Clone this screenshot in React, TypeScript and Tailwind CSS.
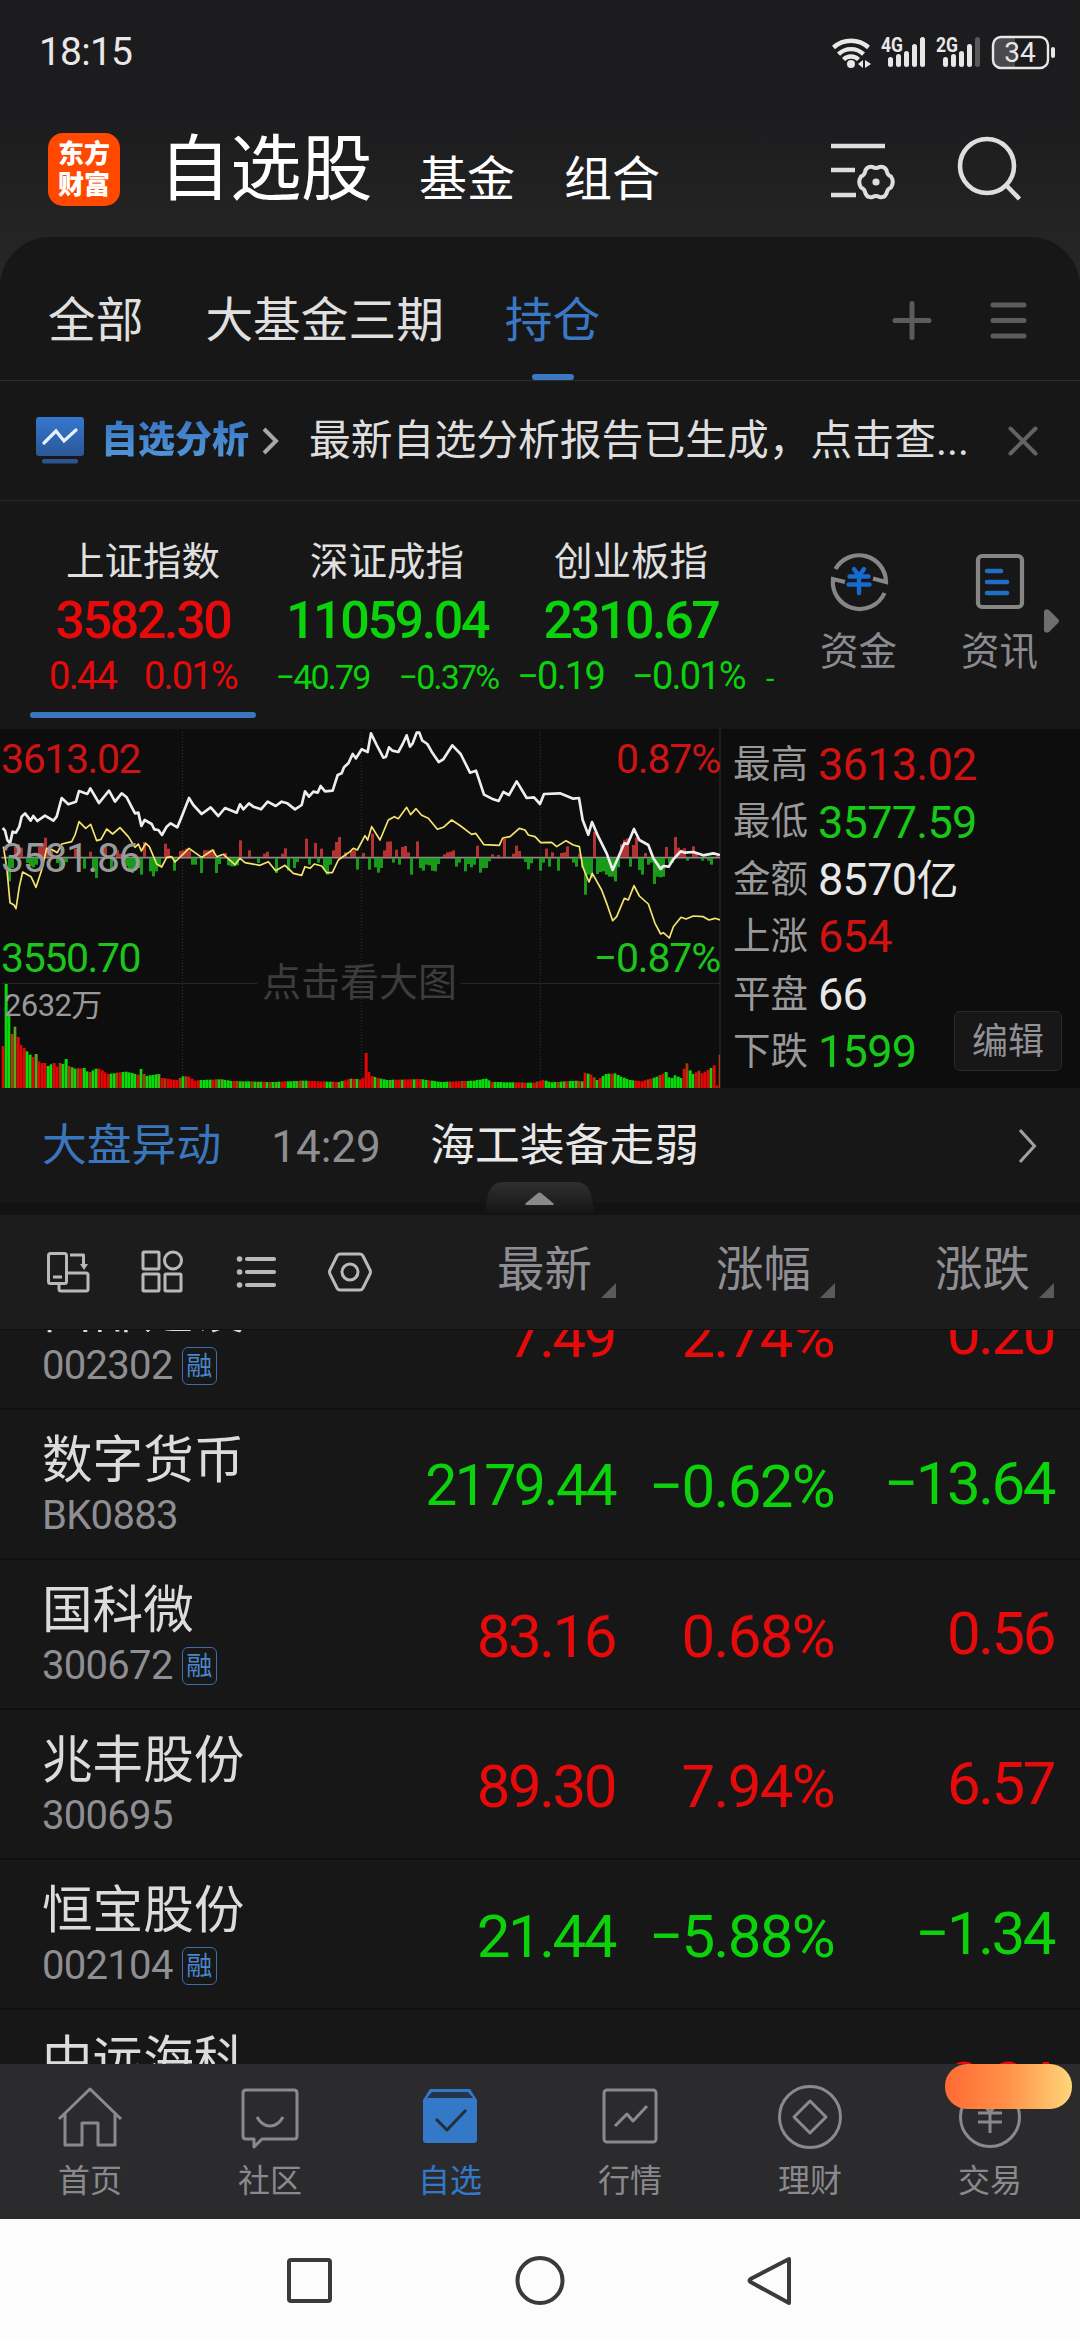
import type { ReactNode } from "react";
import { clsx } from "clsx";

const RED = "text-[#e60a0a]";
const GREEN = "text-[#0cd20c]";

const indices = [
  { name: "上证指数", price: "3582.30", change: "0.44", percent: "0.01%", up: true, active: true },
  { name: "深证成指", price: "11059.04", change: "−40.79", percent: "−0.37%", up: false, active: false },
  { name: "创业板指", price: "2310.67", change: "−0.19", percent: "−0.01%", up: false, active: false },
];

const stats = [
  { label: "最高", value: "3613.02", color: "text-[#d01212]" },
  { label: "最低", value: "3577.59", color: "text-[#18c818]" },
  { label: "金额", value: "8570亿", color: "text-[#e8e8e8]" },
  { label: "上涨", value: "654", color: "text-[#d01212]" },
  { label: "平盘", value: "66", color: "text-[#e8e8e8]" },
  { label: "下跌", value: "1599", color: "text-[#18c818]" },
];

const stocks = [
  { name: "西部建设", code: "002302", margin: true, price: "7.49", percent: "2.74%", change: "0.20", up: true },
  { name: "数字货币", code: "BK0883", margin: false, price: "2179.44", percent: "−0.62%", change: "−13.64", up: false },
  { name: "国科微", code: "300672", margin: true, price: "83.16", percent: "0.68%", change: "0.56", up: true },
  { name: "兆丰股份", code: "300695", margin: false, price: "89.30", percent: "7.94%", change: "6.57", up: true },
  { name: "恒宝股份", code: "002104", margin: true, price: "21.44", percent: "−5.88%", change: "−1.34", up: false },
  { name: "中远海科", code: "002401", margin: true, price: "16.40", percent: "1.48%", change: "0.24", up: true },
];

// Chart coordinates use a 2160 x 1077 grid, one minute pair every 9 units
const PRICE_LINE =
  "8,324 15,332 22,360 30,370 38,335 48,338 58,320 65,290 75,280 92,302 100,288 112,303 135,287 160,302 170,290 185,234 205,253 228,245 237,213 262,222 271,205 297,249 327,212 345,245 365,220 380,232 405,280 415,278 424,318 434,300 455,312 463,328 475,330 486,345 500,320 512,310 532,322 545,290 567,234 580,255 605,282 632,262 655,288 675,264 710,278 720,253 730,268 747,250 760,260 783,268 803,245 827,258 845,245 862,250 885,268 905,255 915,214 927,230 940,215 953,218 962,198 975,214 998,212 1013,165 1025,160 1032,142 1045,130 1058,102 1068,115 1085,88 1103,96 1113,40 1130,75 1150,113 1158,110 1167,82 1177,92 1195,96 1208,72 1220,46 1230,80 1238,70 1250,38 1258,38 1267,62 1282,72 1295,95 1316,126 1330,118 1357,76 1382,102 1410,158 1428,152 1452,224 1480,238 1496,243 1510,216 1527,225 1550,184 1580,234 1602,232 1620,252 1632,222 1680,220 1720,236 1737,234 1748,300 1765,344 1776,306 1795,350 1820,400 1838,450 1860,400 1873,370 1883,372 1902,327 1918,360 1945,375 1960,415 1982,447 1990,438 2006,440 2020,418 2042,394 2055,398 2080,396 2110,406 2140,400 2160,405";

const AVERAGE_LINE =
  "10,380 20,440 30,548 42,555 48,566 58,500 68,456 93,470 108,502 125,450 140,385 158,390 172,398 185,372 215,365 225,345 237,305 257,325 272,313 290,362 303,358 320,327 338,342 360,323 385,350 405,382 415,372 424,393 437,370 448,380 470,432 485,441 500,412 515,410 525,426 567,385 585,398 605,412 638,390 650,410 670,403 705,434 720,415 735,428 780,436 805,425 827,452 855,436 880,460 905,466 915,440 930,445 943,432 965,438 980,458 997,458 1015,420 1050,395 1060,385 1072,390 1095,347 1103,360 1115,320 1140,360 1165,300 1183,290 1195,296 1220,262 1232,284 1248,266 1265,286 1285,295 1312,328 1330,322 1355,300 1382,318 1415,343 1427,340 1452,374 1498,376 1508,354 1530,350 1558,325 1575,330 1585,345 1605,350 1622,368 1655,367 1670,380 1698,362 1720,375 1738,380 1748,440 1767,486 1777,460 1805,510 1820,550 1838,602 1850,590 1873,535 1885,540 1902,497 1918,528 1945,552 1965,610 1982,642 1990,638 2008,654 2020,620 2043,592 2058,597 2080,588 2110,590 2127,600 2145,595 2160,600";

// [bar index, height], positive bars are drawn in red above the base line
const MOMENTUM: [number, number][] = [
  [2, -70], [3, -30], [4, 30], [5, 38], [6, 28], [8, -15], [9, -25], [10, -28], [11, -20], [12, 30], [13, 40], [14, 58], [15, 28], [16, 25],
  [18, -15], [19, -30], [20, -20], [21, -12], [24, 25], [25, 35], [27, -32], [29, 16], [30, -30], [31, -60], [34, 35], [36, -35], [38, 20], [39, 10],
  [41, -25], [42, -35], [43, -45], [44, -35], [45, -30], [46, -50], [47, 45], [49, -40], [50, -55], [51, -40], [52, -25], [54, 40], [55, 25], [57, -38],
  [59, 18], [60, 20], [61, 25], [62, 20], [63, -20], [64, -20], [66, -45], [67, 20], [68, 20], [69, 20], [70, 22], [71, -45], [72, -18], [74, 12],
  [75, -22], [76, -25], [77, -25], [78, -22], [79, 50], [82, 20], [85, -15], [87, 10], [88, 16], [91, -45], [93, 10], [94, 26], [95, -38], [97, -30], [98, -12],
  [101, 55], [102, -20], [104, 42], [105, -14], [106, 25], [107, -36], [108, -50], [109, -20], [110, 20], [111, 45], [112, 60], [114, 14], [116, 18], [117, 20], [118, -35], [120, 12],
  [122, -35], [123, 70], [124, -28], [125, -44], [126, -30], [127, 20], [128, 46], [129, 47], [130, -14], [131, 22], [132, -20], [133, 30], [134, 33], [135, 14], [136, -50],
  [138, 47], [139, -30], [140, -38], [141, -20], [142, -22], [143, -38], [144, -40], [145, -18], [147, 8], [148, 14], [149, 16], [150, 20], [151, -26], [152, -14],
  [154, -40], [155, -18], [156, -28], [157, -20], [158, 34], [159, -44], [160, -30], [161, -30], [162, -10], [163, 8], [165, 6], [167, 55], [170, 10], [171, 34], [172, 18],
  [174, -12], [175, -34], [176, -16], [179, -38], [180, -14], [181, 25], [182, -26], [183, 14], [185, -38], [186, 12], [187, 14], [188, 32], [190, -14], [191, -26], [192, 10],
  [193, -28], [194, -110], [195, -50], [196, -60], [197, 76], [198, -48], [199, -42], [200, -40], [201, -50], [202, -56], [203, -56], [204, -70], [205, -28], [206, 38], [207, 52], [208, 56],
  [209, -26], [210, 36], [211, 58], [212, -36], [213, -50], [214, 12], [215, -20], [216, -14], [217, -78], [218, -56], [219, -58], [220, -56], [221, 30], [222, -16], [223, -14],
  [224, 60], [225, 28], [226, 22], [227, 26], [228, -8], [230, 32], [231, 14], [233, -8], [235, -8], [236, -20], [238, 4],
];

// Keyframes of the volume histogram: [bar index, height]
const VOLUME: [number, number][] = [
  [0, 126], [1, 312], [2, 216], [3, 162], [4, 184], [5, 153], [6, 129], [7, 120], [8, 110], [9, 100], [10, 93], [11, 102], [12, 80], [13, 75], [14, 75], [15, 66],
  [17, 75], [18, 64], [19, 75], [20, 72], [21, 87], [22, 66], [24, 58], [27, 60], [28, 50], [29, 48], [31, 58], [32, 58], [35, 42], [41, 49], [45, 40], [46, 57], [47, 42],
  [48, 36], [52, 42], [53, 30], [58, 24], [60, 35], [62, 34], [64, 22], [68, 25], [73, 26], [76, 21], [90, 18], [100, 22], [112, 18], [116, 28], [119, 26], [120, 30], [121, 105],
  [122, 48], [123, 36], [125, 30], [128, 24], [136, 26], [139, 27], [146, 18], [157, 22], [161, 28], [163, 18], [177, 16], [180, 24], [183, 17], [191, 22], [193, 20],
  [194, 46], [196, 40], [198, 24], [201, 42], [204, 44], [206, 34], [209, 24], [213, 20], [218, 34], [221, 48], [222, 32], [223, 30], [224, 38], [226, 30], [227, 58],
  [228, 74], [229, 53], [230, 42], [232, 52], [233, 44], [235, 54], [236, 60], [237, 68], [238, 8], [239, 100],
];

const VOLUME_COLORS =
  "rggmorrrggrorrrggrrmggmogmrggmggrrrrggmrgggggrgmggggormrrrrmgmrrrrggggrmgogggrmgoggmgogrgmgogrrgggomogrrrrrrggmrogrrorgrrrrrgrgggogrrorrrgrrggrggggggmrrrmrggggggggrgggggggrrmrggrmrrggggmgorggomorgrmgrgggrgggggggrrrrmrggmrggggggrmggrmrrrgrrmrggrrorg";

const FILLS: Record<string, string> = { r: "#e60505", g: "#08dc08", m: "#a83c0c", o: "#55a81c" };

function volumeAt(index: number) {
  const next = VOLUME.findIndex(([i]) => i >= index);
  if (VOLUME[next][0] === index) return VOLUME[next][1];
  const [x0, y0] = VOLUME[next - 1];
  const [x1, y1] = VOLUME[next];
  return Math.round(y0 + ((y1 - y0) * (index - x0)) / (x1 - x0));
}

function StatusBar() {
  return (
    <div className="flex h-[104px] items-center justify-between pl-[39px] pr-[24px] text-[#e8e8e8]">
      <span className="text-[39px] leading-none tracking-[-0.8px]">18:15</span>
      <div className="flex items-center gap-[10px]">
        <svg width="39" height="34" viewBox="0 0 39 34" fill="none" stroke="currentColor" strokeWidth="4.4">
          <path d="M1.5 12.5a26 26 0 0 1 35 0" />
          <path d="M6.5 19.2a18 18 0 0 1 25 0" />
          <path d="M11.500 24.500a11 11 0 0 1 15 0" />
          <circle cx="19" cy="29" r="4" fill="currentColor" stroke="none" />
          <path d="M31 25v8l-5-4zM33 25v8l6-4z" fill="currentColor" stroke="none" />
        </svg>
        <Signal label="4G" weak={false} />
        <Signal label="2G" weak />
        <svg width="65" height="35" viewBox="0 0 65 35" fill="none">
          <path d="M10 2h14v31H10a8 8 0 0 1-8-8V10a8 8 0 0 1 8-8z" fill="#4a4a4c" />
          <rect x="2" y="2" width="55" height="31" rx="8" stroke="currentColor" strokeWidth="2.4" />
          <rect x="60" y="12" width="4" height="11" rx="2" fill="currentColor" />
          <text x="29" y="27" textAnchor="middle" fontSize="28" fill="currentColor" fontFamily="Roboto">
            34
          </text>
        </svg>
      </div>
    </div>
  );
}

function Signal({ label, weak }: { label: string; weak: boolean }) {
  return (
    <svg className="overflow-visible" width="45" height="34" viewBox="0 0 45 34" fill="currentColor">
      <text x="0" y="17" fontSize="20" fontWeight="700" textLength="22" lengthAdjust="spacingAndGlyphs" fontFamily="Roboto">
        {label}
      </text>
      <rect x="7" y="22" width="5" height="10" rx="2.500" />
      <rect x="15" y="19" width="5" height="13" rx="2.500" />
      <rect x="23" y="16" width="5" height="16" rx="2.500" />
      <rect x="31" y="9" width="5" height="23" rx="2.500" />
      <rect x="39" y="2" width="5" height="30" rx="2.500" opacity={weak ? 0.3 : 1} />
    </svg>
  );
}

function Header() {
  return (
    <header className="flex h-[133px] pl-[48px] text-white">
      <div className="mt-[29px] flex h-[73px] w-[72px] flex-col items-center justify-center rounded-[15px] bg-[#ff4800] text-[26px] font-black leading-[31px]">
        <span>东方</span>
        <span>财富</span>
      </div>
      <div className="flex pl-[39px]">
        <h1 className="mt-[30px] w-[260px] text-[71.500px] leading-none tracking-[-0.5px]">自选股</h1>
        <span className="mt-[52px] w-[145px] text-[48px] leading-none">基金</span>
        <span className="mt-[52px] text-[48px] leading-none">组合</span>
      </div>
      <svg className="ml-auto mr-[58px] mt-[32px]" width="192" height="72" viewBox="0 0 192 72" fill="none" stroke="#dedede" strokeWidth="4.6">
        <path d="M1 10h54M1 34h24M1 59h25" />
        <path
          d="M42.500 31q3.500 2 7 0q6-1 7.500 5q.5 3 4 4.500q3.500 5.500 0 11q-3.500 1.500-4 4.500q-1.500 6-7.500 5q-3.500-2-7 0q-6 1-7.500-5q-.5-3-4-4.500q-3.500-5.500 0-11q3.500-1.500 4-4.500q1.500-6 7.500-5z"
          strokeWidth="4"
        />
        <circle cx="46" cy="46" r="3.600" fill="#dedede" stroke="none" />
        <circle cx="157" cy="30" r="27" />
        <path d="M175 48l14.500 15" />
      </svg>
    </header>
  );
}

function GroupTabs() {
  return (
    <div className="flex h-[144px] border-b border-[#2d2d2d] text-[47.700px] leading-none text-[#e0e0e0]">
      <span className="ml-[48px] mt-[61px]">全部</span>
      <span className="ml-[62px] mt-[61px]">大基金三期</span>
      <div className="ml-[61px] flex flex-col items-center text-[#3a78c3]">
        <span className="mt-[61px]">持仓</span>
        <i className="mt-auto h-[6px] w-[42px] rounded-full bg-[#3a78c3]" />
      </div>
      <svg className="ml-auto mr-[53px] mt-[62px]" width="136" height="44" viewBox="0 0 136 44" stroke="#5c5c5c" strokeWidth="5" strokeLinecap="round">
        <path d="M4 21.500h34M21 4.500v34M102 6h31M102 21.500h31M102 37h31" />
      </svg>
    </div>
  );
}

function AnalysisBanner() {
  return (
    <div className="flex h-[120px] items-center border-b border-[#2a2a2a] pl-[36px]">
      <svg width="48" height="48" viewBox="0 0 48 48" fill="none">
        <defs>
          <linearGradient id="analysis" x1="0" y1="0" x2="0" y2="1">
            <stop offset="0" stopColor="#3478cf" />
            <stop offset="1" stopColor="#2b5796" />
          </linearGradient>
        </defs>
        <rect width="48" height="39" y="0" rx="3" fill="url(#analysis)" />
        <rect x="6" y="42" width="36" height="4.500" rx="2" fill="#2c5490" />
        <path d="M8 26l12-12 8 10 12-11" stroke="#e6f1ff" strokeWidth="3.200" strokeLinecap="round" />
      </svg>
      <span className="ml-[17px] bg-gradient-to-b from-[#3a75c4] to-[#559bd9] bg-clip-text text-[37px] font-black leading-[44px] text-transparent">
        自选分析
      </span>
      <svg className="ml-[13px]" width="18" height="30" viewBox="0 0 18 30" fill="none" stroke="#a8a8a8" strokeWidth="4">
        <path d="M2 3l12 12L2 27" />
      </svg>
      <p className="ml-[29px] w-[671px] whitespace-nowrap text-[41.800px] leading-none text-[#dedede]">最新自选分析报告已生成，点击查...</p>
      <svg className="ml-[28px]" width="30" height="30" viewBox="0 0 30 30" stroke="#636363" strokeWidth="4" strokeLinecap="round">
        <path d="M2.500 2.500l25 25M27.500 2.500l-25 25" />
      </svg>
    </div>
  );
}

function IndexBar() {
  return (
    <div className="flex h-[228px] pl-[21px]">
      {indices.map((item) => (
        <div key={item.name} className={clsx("flex w-[244px] flex-col items-center", item.up ? RED : GREEN)}>
          <span className="mt-[42px] text-[38.500px] leading-none text-[#e0e0e0]">{item.name}</span>
          <span className="mt-[13px] text-[52px] font-medium leading-none tracking-[-2.400px]">{item.price}</span>
          <span
            className={clsx(
              "mt-[10px] flex h-[38px] items-center justify-center whitespace-nowrap leading-none tracking-[-1.800px]",
              item.name === "深证成指" ? "gap-[29px] pt-[2px] text-[34px]" : "gap-[28px] text-[38px]",
            )}
          >
            <span>{item.change}</span>
            <span>{item.percent}</span>
          </span>
          {item.active && <i className="mt-[17px] h-[6px] w-[226px] rounded-full bg-[#3a76bd]" />}
        </div>
      ))}
      <span className={clsx("ml-[13px] mt-[163px] w-[22px] text-[30px] leading-none", GREEN)}>-</span>
      <Shortcut label="资金">
        <g stroke="#868686" strokeWidth="4.200" fill="none">
          <path d="M6.500 20A27 27 0 0 1 57 33l-13-3.500" strokeLinejoin="miter" />
          <path d="M55.500 44A27 27 0 0 1 4 30l12 3" />
        </g>
        <path d="M25 20l5 7 5-7M20.500 27.500h19M19.500 35.500h21M30 27v17" stroke="#166bd0" strokeWidth="4.400" strokeLinecap="round" fill="none" />
      </Shortcut>
      <Shortcut label="资讯">
        <rect x="8" y="7" width="44" height="51" rx="4" stroke="#868686" strokeWidth="4.200" fill="none" />
        <path d="M17 22h14M17 33h20M17 44h20" stroke="#1f6fc8" strokeWidth="4.600" strokeLinecap="round" />
      </Shortcut>
      <svg className="-ml-[26px] mt-[108px]" width="16" height="24" viewBox="0 0 16 24" fill="#6e6e6e">
        <path d="M0 2q2-3 5-1l9 9q2 2 0 4l-9 9q-3 2-5-1z" />
      </svg>
    </div>
  );
}

function Shortcut({ label, children }: { label: string; children: ReactNode }) {
  return (
    <div className="flex w-[141px] flex-col items-center text-[#8a8a8f]">
      <svg className="mt-[48px]" width="60" height="64" viewBox="0 0 60 64">
        {children}
      </svg>
      <span className="mt-[20px] text-[38.500px] leading-none">{label}</span>
    </div>
  );
}

function MinuteChart() {
  return (
    <div className="relative h-[359px] w-[721px] border-r-2 border-[#1e1e1e] leading-none">
      <svg width="720" height="359" viewBox="0 27 2160 1077" preserveAspectRatio="none" fill="none">
        <g stroke="#333" strokeWidth="3" strokeDasharray="3 6">
          <path d="M547 36V1104M1084 36V1104M1621 36V1104" />
        </g>
        <path d="M4 790H772M1382 790H2160" stroke="#2b2b2b" strokeWidth="3" />
        <path d="M4 413H2160" stroke="#8a8a8a" strokeWidth="5" />
        {MOMENTUM.map(([i, h]) => (
          <rect key={i} x={6 + i * 9} y={h > 0 ? 411 - h : 414} width="9" height={Math.abs(h)} fill={h > 0 ? "#b43232" : "#1a9a1a"} />
        ))}
        {Array.from({ length: 240 }, (_, i) => {
          const h = volumeAt(i);
          return <rect key={i} x={5 + i * 9} y={1104 - h} width={i % 2 ? 9 : 8} height={h} fill={FILLS[VOLUME_COLORS[i] ?? "g"]} />;
        })}
        <polyline points={AVERAGE_LINE} stroke="#f6e470" strokeWidth="5" strokeLinejoin="round" />
        <polyline points={PRICE_LINE} stroke="#ededed" strokeWidth="8" strokeLinejoin="round" />
      </svg>
      <span className="absolute left-[1px] top-[10px] text-[41px] tracking-[-1.400px] text-[#cc1414]">3613.02</span>
      <span className="absolute left-[1px] top-[109px] text-[41px] tracking-[-1.400px] text-[#9a9a9a]">3581.86</span>
      <span className="absolute left-[1px] top-[209px] text-[41px] tracking-[-1.400px] text-[#1cc41c]">3550.70</span>
      <span className="absolute right-[-1px] top-[10px] text-[41px] tracking-[-1.200px] text-[#cc1414]">0.87%</span>
      <span className="absolute right-[-1px] top-[209px] text-[41px] tracking-[-1.200px] text-[#1cc41c]">−0.87%</span>
      <span className="absolute left-[262px] top-[235px] text-[39px] text-[#3c3c3c]">点击看大图</span>
      <span className="absolute left-[4px] top-[261px] text-[31px] tracking-[-0.600px] text-[#999]">2632万</span>
    </div>
  );
}

function MarketPanel() {
  return (
    <div className="flex h-[359px] bg-[#0d0d0d]">
      <MinuteChart />
      <div className="flex flex-1 justify-between pl-[12px] pr-[18px]">
        <div className="flex flex-col pt-[7px]">
          {stats.map((item) => (
            <div key={item.label} className="flex h-[57.400px] items-center whitespace-nowrap leading-none">
              <span className="w-[85px] text-[37.500px] text-[#999]">{item.label}</span>
              <span className={clsx("text-[45px] tracking-[-0.700px]", item.color)}>
                {item.value.replace("亿", "")}
                {item.value.endsWith("亿") && <span className="text-[42px]">亿</span>}
              </span>
            </div>
          ))}
        </div>
        <button className="-ml-[60px] mt-[282px] flex h-[60px] w-[108px] items-center justify-center rounded-[6px] border border-[#2a2a2a] bg-[#171717] pt-[2px] text-[36px] leading-none text-[#919196]">
          编辑
        </button>
      </div>
    </div>
  );
}

function NewsTicker() {
  return (
    <div className="relative h-[127px] border-b-[12px] border-[#121212] text-[44px] leading-none">
      <div className="flex h-[115px] items-center">
        <span className="ml-[42px] mt-[2px] text-[44.800px] text-[#3a76bd]">大盘异动</span>
        <span className="ml-[50px] mt-[2px] w-[159px] text-[#8e8e93]">14:29</span>
        <span className="mt-[2px] text-[44.800px] text-[#e8e8e8]">海工装备走弱</span>
        <svg className="ml-auto mr-[43px]" width="18" height="36" viewBox="0 0 18 36" fill="none" stroke="#a0a0a0" strokeWidth="3">
          <path d="M1 2l14.500 16L1 34" />
        </svg>
      </div>
      <svg className="absolute left-[484px] top-[93px]" width="111" height="33" viewBox="0 0 111 33">
        <defs>
          <linearGradient id="handle" x1="0" y1="0" x2="0" y2="1">
            <stop offset="0" stopColor="#303030" />
            <stop offset="1" stopColor="#151515" />
          </linearGradient>
        </defs>
        <path d="M0 32L4 14Q7 1 20 1h71q13 0 16 13l4 18z" fill="url(#handle)" />
        <path d="M42 22l12-10q1.500-1 3 0l12 10q2 2-1 2H43q-3 0-1-2z" fill="#8a8a8a" />
      </svg>
    </div>
  );
}

function ListHeader() {
  return (
    <div className="flex h-[115px] items-center justify-between border-b border-[#0e0e0e] bg-[#1c1c1c] pr-[26px]">
      <svg className="ml-[44px]" width="330" height="48" viewBox="0 0 330 48" fill="none" stroke="#b9b9b9" strokeWidth="3" strokeLinejoin="round">
        <rect x="4.500" y="5.500" width="18" height="30" rx="2" />
        <path d="M9 29h9M26 7h13.500v10M15 36v5q0 2 2 2h25q2 0 2-2V27q0-2-2-2H24" />
        <path d="M36 16h8l-4 6z" fill="#b9b9b9" stroke="none" />
        <rect x="99" y="4" width="16" height="17" rx="1" />
        <circle cx="129" cy="12.500" r="8.500" />
        <rect x="99" y="26" width="16" height="17" rx="1" />
        <rect x="121" y="26" width="16" height="17" rx="1" />
        <path d="M203 11h27M203 24h27M203 37h27" strokeWidth="4.200" strokeLinecap="round" />
        <path d="M195.500 11h.1M195.500 24h.1M195.500 37h.1" strokeWidth="5.500" strokeLinecap="round" />
        <path d="M296 6h20q2 0 3 2l7 14q1 2 0 4l-7 14q-1 2-3 2h-20q-2 0-3-2l-7-14q-1-2 0-4l7-14q1-2 3-2z" />
        <circle cx="306" cy="24" r="8" />
      </svg>
      <div className="flex">
        {["最新", "涨幅", "涨跌"].map((label) => (
          <div key={label} className="flex w-[219px] items-start justify-end text-[47.500px] leading-none text-[#8e8e93]">
            {label}
            <svg className="ml-[9px] mt-[36px]" width="15" height="15" viewBox="0 0 15 15" fill="#5a5a5c">
              <path d="M15 0v15H0z" />
            </svg>
          </div>
        ))}
      </div>
    </div>
  );
}

function StockRow({ stock }: { stock: (typeof stocks)[number] }) {
  return (
    <li className="flex h-[150px] shrink-0 border-b-2 border-[#101010] pl-[42px] pr-[26px] leading-none">
      <div className="flex-1">
        <div className="mt-[26px] text-[50.600px] text-[#dcdcdc]">{stock.name}</div>
        <div className="mt-[9px] flex h-[40px] items-center gap-[9px] text-[40px] tracking-[-0.700px] text-[#8e8e93]">
          {stock.code}
          {stock.margin && (
            <span className="flex h-[38px] w-[35px] items-center justify-center rounded-[6px] border border-[#3d6ea8] text-[26px] tracking-normal text-[#4a86cc]">
              融
            </span>
          )}
        </div>
      </div>
      <div className={clsx("flex text-right text-[60px] tracking-[-2.500px]", stock.up ? RED : GREEN)}>
        <span className={clsx("mt-[47px] w-[220px]", stock.price.length > 6 && "text-[57px]")}>{stock.price}</span>
        <span className="mt-[47px] w-[219px] tracking-[-1.700px]">{stock.percent}</span>
        <span className="mt-[44px] w-[220px]">{stock.change}</span>
      </div>
    </li>
  );
}

function TabItem({ label, active, children }: { label: string; active?: boolean; children: ReactNode }) {
  return (
    <div className={clsx("flex w-[180px] flex-col items-center", active ? "text-[#3478c8]" : "text-[#8a8a8d]")}>
      <svg className="mt-[19px]" width="68" height="68" viewBox="0 0 68 68" fill="none" stroke="currentColor" strokeWidth="3" strokeLinejoin="round">
        {children}
      </svg>
      <span className="mt-[14px] text-[32px] leading-none">{label}</span>
    </div>
  );
}

function BottomTabs() {
  return (
    <nav className="relative flex h-[155px] bg-[#2b2b2d]">
      <TabItem label="首页">
        <path d="M3 36L34 6l31 30M9 31v31h17V40h16v22h17V31" />
      </TabItem>
      <TabItem label="社区">
        <path d="M10 7h48q3 0 3 3v43q0 3-3 3H26l-8 8v-8h-8q-3 0-3-3V10q0-3 3-3z" />
        <path d="M21 34q5 9 13 9t13-9" />
      </TabItem>
      <TabItem label="自选" active>
        <path d="M14 6h40l7 11v40q0 3-3 3H10q-3 0-3-3V17z" fill="currentColor" stroke="none" />
        <path d="M16 9h36l5 6H11z" fill="#24344a" stroke="none" />
        <path d="M20 36l11 11 19-20" stroke="#252d3a" />
      </TabItem>
      <TabItem label="行情">
        <rect x="8" y="7" width="52" height="52" rx="3" />
        <path d="M19 43l12-12 6 7 14-15" />
      </TabItem>
      <TabItem label="理财">
        <circle cx="34" cy="34" r="30.500" />
        <path d="M34 18l16 16-16 16-16-16z" />
      </TabItem>
      <TabItem label="交易">
        <circle cx="34" cy="34" r="29.500" />
        <path d="M24 18l10 11 10-11M22 30h24M22 39h24M34 29v21" />
      </TabItem>
      <i className="absolute left-[945px] top-0 h-[45px] w-[127px] rounded-[22px] bg-gradient-to-r from-[#ff6a35] via-[#ff9148] to-[#ffd57a]" />
    </nav>
  );
}

function SystemNav() {
  return (
    <div className="flex h-[121px] items-center justify-center bg-[#fcfcfc]">
      <svg width="508" height="50" viewBox="0 0 508 50" fill="none" stroke="#3a3a3a" strokeWidth="4" strokeLinejoin="round">
        <rect x="3" y="5" width="41" height="41" rx="2" />
        <circle cx="254" cy="25.500" r="22.500" />
        <path d="M503 4v44L464.500 27q-2-1.500 0-3z" />
      </svg>
    </div>
  );
}

export default function App() {
  return (
    <div className="flex h-[2340px] w-[1080px] flex-col overflow-hidden bg-[#242424] font-['Roboto','Noto_Sans_CJK_SC',sans-serif]">
      <div className="h-[285px] shrink-0 bg-gradient-to-b from-[#1c1c1e] from-40% to-[#272727]">
        <StatusBar />
        <Header />
      </div>
      <main className="-mt-[48px] shrink-0 rounded-t-[50px] bg-[#171717]">
        <GroupTabs />
        <AnalysisBanner />
        <IndexBar />
        <MarketPanel />
        <NewsTicker />
        <ListHeader />
        <ul className="flex h-[734px] flex-col overflow-hidden">
          <li className="-mt-[70px]" />
          {stocks.map((stock) => (
            <StockRow key={stock.code} stock={stock} />
          ))}
        </ul>
      </main>
      <BottomTabs />
      <SystemNav />
    </div>
  );
}
